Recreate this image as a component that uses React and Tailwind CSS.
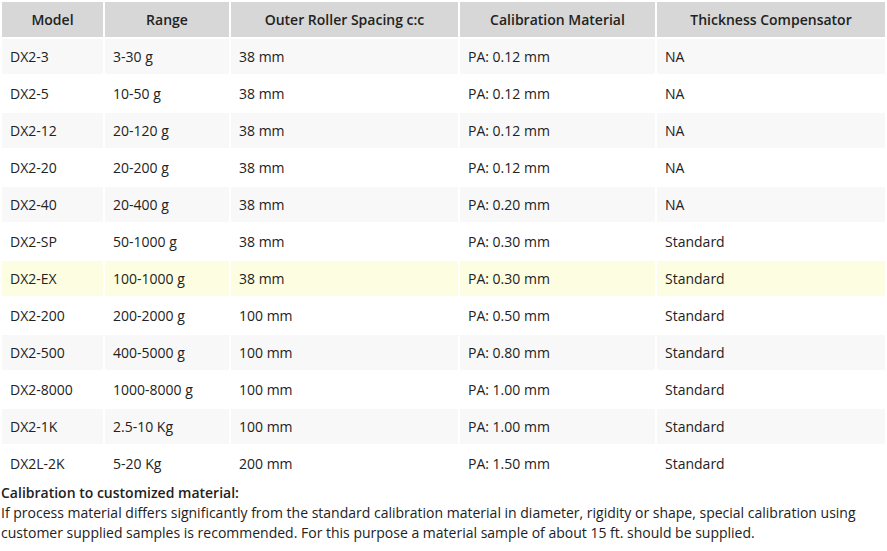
import React from 'react';

const rows = [
  ['DX2-3', '3-30 g', '38 mm', 'PA: 0.12 mm', 'NA'],
  ['DX2-5', '10-50 g', '38 mm', 'PA: 0.12 mm', 'NA'],
  ['DX2-12', '20-120 g', '38 mm', 'PA: 0.12 mm', 'NA'],
  ['DX2-20', '20-200 g', '38 mm', 'PA: 0.12 mm', 'NA'],
  ['DX2-40', '20-400 g', '38 mm', 'PA: 0.20 mm', 'NA'],
  ['DX2-SP', '50-1000 g', '38 mm', 'PA: 0.30 mm', 'Standard'],
  ['DX2-EX', '100-1000 g', '38 mm', 'PA: 0.30 mm', 'Standard'],
  ['DX2-200', '200-2000 g', '100 mm', 'PA: 0.50 mm', 'Standard'],
  ['DX2-500', '400-5000 g', '100 mm', 'PA: 0.80 mm', 'Standard'],
  ['DX2-8000', '1000-8000 g', '100 mm', 'PA: 1.00 mm', 'Standard'],
  ['DX2-1K', '2.5-10 Kg', '100 mm', 'PA: 1.00 mm', 'Standard'],
  ['DX2L-2K', '5-20 Kg', '200 mm', 'PA: 1.50 mm', 'Standard'],
];

const headers = ['Model', 'Range', 'Outer Roller Spacing c:c', 'Calibration Material', 'Thickness Compensator'];

export default function App() {
  return (
    <div className="w-[887px] bg-white text-[14px] text-[#222] font-['Open_Sans',sans-serif]">
      <table className="w-full table-fixed border-separate border-spacing-[2px]">
        <colgroup>
          <col className="w-[101px]" />
          <col className="w-[124px]" />
          <col className="w-[227px]" />
          <col className="w-[195px]" />
          <col className="w-[228px]" />
        </colgroup>
        <thead>
          <tr>
            {headers.map((h) => (
              <th key={h} className="h-[35px] p-0 bg-[#d7d7d7] text-center font-semibold leading-5">
                {h}
              </th>
            ))}
          </tr>
        </thead>
        <tbody>
          {rows.map((r, i) => {
            // highlighted row for DX2-EX
            const bg = r[0] === 'DX2-EX' ? 'bg-[#fdfde2]' : i % 2 === 0 ? 'bg-[#f8f8f8]' : 'bg-white';
            return (
              <tr key={r[0]}>
                {r.map((c, j) => (
                  <td key={j} className={`h-[35px] py-0 px-2 leading-5 ${bg}`}>
                    {c}
                  </td>
                ))}
              </tr>
            );
          })}
        </tbody>
      </table>
      <div className="leading-5 px-px">
        <div className="font-semibold">Calibration to customized material:</div>
        <p>
          If process material differs significantly from the standard calibration material in diameter, rigidity or shape, special calibration using customer supplied samples is recommended. For this purpose a material sample of about 15 ft. should be supplied.
        </p>
      </div>
    </div>
  );
}
